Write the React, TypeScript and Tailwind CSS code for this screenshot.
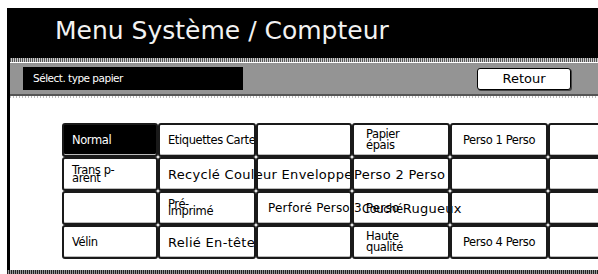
import React from "react";

type Cell = {
  text?: string;
  big?: boolean;
  dark?: boolean;
  clip?: boolean;
  center?: boolean;
  lead?: string;
  pad?: string;
  tail?: string;
  size?: string;
};

const rows: Cell[][] = [
  [
    { text: "Normal", dark: true },
    { text: "Etiquettes Carte", clip: true },
    {},
    { text: "Papier\népais", lead: "leading-[11px]", pad: "pl-[12px]" },
    { text: "Perso 1 Perso", center: true },
    {},
  ],
  [
    { text: "Trans p-\narent", lead: "leading-[8px]" },
    { text: "Recyclé Couleur Enveloppe", big: true },
    {},
    { text: "Perso 2 Perso", big: true, pad: "pl-0" },
    {},
    {},
  ],
  [
    {},
    { text: "Pré-\nimprimé", lead: "leading-[7px]" },
    { text: "Perforé Perso 3 Perso", big: true, pad: "pl-[10px]", size: "text-[12px] tracking-[0.2px]" },
    { text: "Couché", tail: "Rugueux", pad: "pl-[8px]" },
    {},
    {},
  ],
  [
    { text: "Vélin" },
    { text: "Relié En-tête", big: true, clip: true },
    {},
    { text: "Haute\nqualité", lead: "leading-[11px]", pad: "pl-[12px]" },
    { text: "Perso 4 Perso", center: true },
    {},
  ],
];

const bigText = "text-[13px] tracking-[0.3px] leading-[15px] font-['DejaVu_Sans',sans-serif]";
const smallText = "text-[11.5px] tracking-[-0.4px] font-['DejaVu_Sans',sans-serif]";

function GridCell({ c }: { c: Cell }) {
  const lines = (c.text ?? "").split("\n");
  return (
    <div
      className={
        "relative flex h-[34px] flex-col justify-center whitespace-nowrap rounded-[3px] border-2 border-[#1a1a1a] shadow-[inset_0_-1px_0_#bbb] " +
        (c.dark ? "bg-black text-white " : "text-black ") +
        (c.clip ? "overflow-hidden " : "overflow-visible ") +
        (c.center ? "items-center " : "items-start ") +
        (c.pad ?? (c.center ? "" : "pl-[8px]"))
      }
    >
      {lines.map((l, i) => (
        <span
          key={i}
          className={
            c.big
              ? c.size
                ? "leading-[15px] font-['DejaVu_Sans',sans-serif] " + c.size
                : bigText
              : smallText + " " + (c.lead ?? "leading-[14px]")
          }
        >
          {l}
          {c.tail && <span className={bigText}>{c.tail}</span>}
        </span>
      ))}
    </div>
  );
}

export default function App() {
  return (
    <div className="h-[274px] w-[598px] overflow-hidden bg-white pl-[7px] pt-[8px]">
      <div className="flex h-[262px] flex-col border-l-[3px] border-black">
        {/* title bar */}
        <div className="flex h-[50px] items-center bg-black pl-[45px] pb-[4px]">
          <span className="font-['DejaVu_Sans',sans-serif] text-[25px] text-[#f2f2f2]">
            Menu Système / Compteur
          </span>
        </div>
        <div className="h-[4px] bg-[repeating-linear-gradient(90deg,#555_0_1px,#ccc_1px_2px)]" />
        <div className="h-[1px] bg-white" />
        {/* sub bar */}
        <div className="flex h-[33px] items-center justify-between border-b-2 border-[#555] bg-[#949494] pl-[13px] pr-[27px]">
          <div className="flex h-[23px] w-[220px] items-center bg-black pl-[10px]">
            <span className="font-['DejaVu_Sans',sans-serif] text-[10.5px] tracking-[-0.5px] text-white">
              Sélect. type papier
            </span>
          </div>
          <button className="flex h-[22px] w-[94px] items-center justify-center rounded-[3px] border border-black bg-white shadow-[1px_1px_0_#444]">
            <span className="font-['DejaVu_Sans',sans-serif] text-[13px] text-black">Retour</span>
          </button>
        </div>
        <div className="h-[2px] bg-[repeating-linear-gradient(90deg,#bbb_0_1px,#fff_1px_3px)]" />
        {/* paper grid */}
        <div className="flex-1 pl-[52px] pt-[25px]">
          <div className="grid w-[600px] grid-cols-[96px_98px_96px_98px_98px_60px]">
            {rows.map((r, ri) =>
              r.map((c, ci) => <GridCell key={ri + "-" + ci} c={c} />)
            )}
          </div>
        </div>
      </div>
      <div className="h-[5px] bg-[repeating-linear-gradient(90deg,#222_0_1px,#999_1px_2px)]" />
    </div>
  );
}
